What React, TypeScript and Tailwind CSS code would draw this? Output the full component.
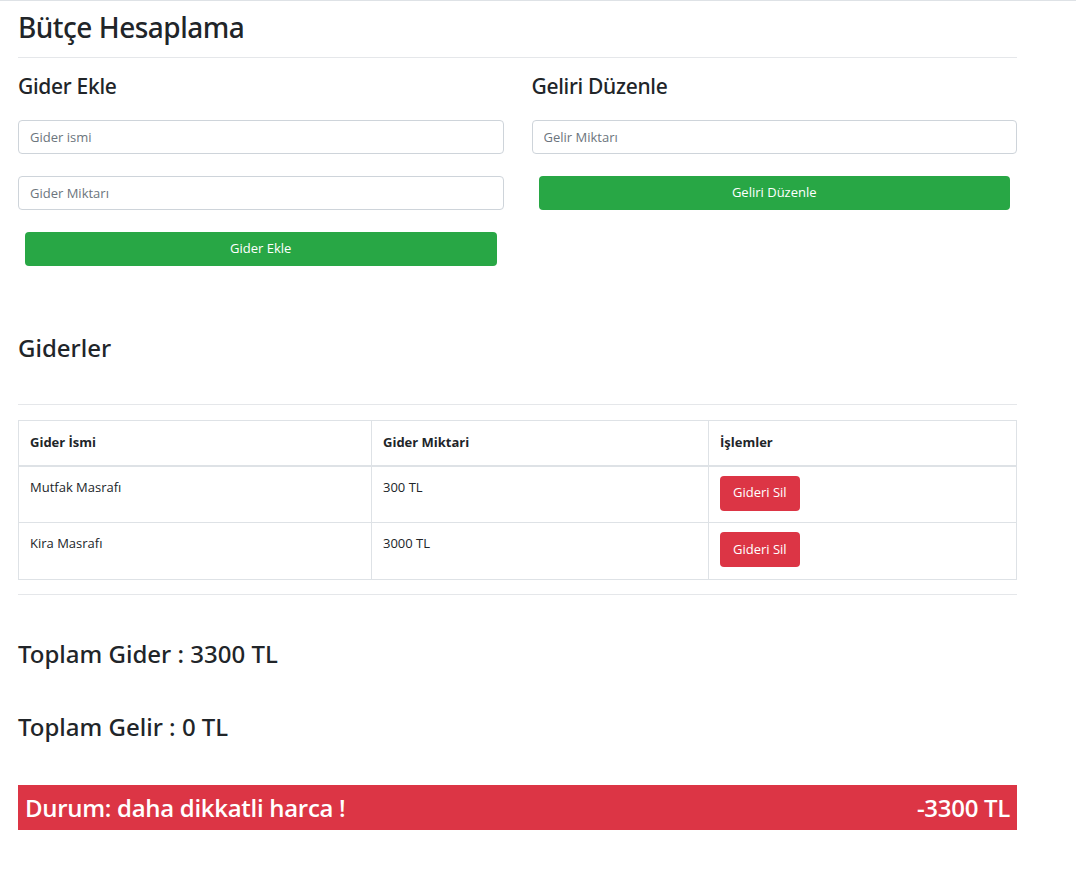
import React from 'react';

const giderler = [
  { id: 1, isim: 'Mutfak Masrafı', miktar: 300 },
  { id: 2, isim: 'Kira Masrafı', miktar: 3000 },
];

const baslik = { fontFamily: '"Noto Sans", "Open Sans", sans-serif' };

export default function App() {
  const toplamGider = giderler.reduce((a, g) => a + g.miktar, 0);
  const toplamGelir = 0;

  return (
    <div
      className="min-h-screen bg-white border-t border-[#dee2e6] text-[#212529]"
      style={{ fontFamily: '"Open Sans", "Noto Sans", sans-serif' }}
    >
      <div className="w-[999px] ml-[18px]">
        {/* başlık */}
        <h1 style={baslik} className="text-[28px] leading-[34px] mt-[9px] mb-[13px] font-medium tracking-[-0.5px]">Bütçe Hesaplama</h1>
        <hr className="border-[#e5e7ea]" />

        {/* formlar */}
        <div className="grid grid-cols-2 gap-[28px] mt-[14px]">
          <div>
            <h4 style={baslik} className="text-[21px] leading-[28px] mb-[20px] font-medium tracking-[-0.3px]">Gider Ekle</h4>
            <input
              placeholder="Gider ismi"
              className="block w-full h-[34px] px-[11px] border border-[#ced4da] rounded text-[13px] placeholder-[#6c757d] outline-none"
            />
            <input
              placeholder="Gider Miktarı"
              className="block w-full h-[34px] px-[11px] mt-[22px] border border-[#ced4da] rounded text-[13px] placeholder-[#6c757d] outline-none"
            />
            <div className="px-[7px] mt-[22px]">
              <button className="w-full h-[34px] bg-[#28a745] text-white text-[13px] rounded">Gider Ekle</button>
            </div>
          </div>
          <div>
            <h4 style={baslik} className="text-[21px] leading-[28px] mb-[20px] font-medium tracking-[-0.3px]">Geliri Düzenle</h4>
            <input
              placeholder="Gelir Miktarı"
              className="block w-full h-[34px] px-[11px] border border-[#ced4da] rounded text-[13px] placeholder-[#6c757d] outline-none"
            />
            <div className="px-[7px] mt-[22px]">
              <button className="w-full h-[34px] bg-[#28a745] text-white text-[13px] rounded">Geliri Düzenle</button>
            </div>
          </div>
        </div>

        {/* giderler tablosu */}
        <h3 style={baslik} className="text-[24px] leading-[30px] mt-[67px] mb-[41px] font-medium">Giderler</h3>
        <hr className="border-[#e5e7ea]" />
        <table className="w-full mt-[15px] border-collapse text-[13px]">
          <thead>
            <tr className="h-[45px]">
              <th className="w-[353px] text-left font-bold px-[11px] border border-[#dee2e6] border-b-2">Gider İsmi</th>
              <th className="w-[337px] text-left font-bold px-[11px] border border-[#dee2e6] border-b-2">Gider Miktari</th>
              <th className="text-left font-bold px-[11px] border border-[#dee2e6] border-b-2">İşlemler</th>
            </tr>
          </thead>
          <tbody>
            {giderler.map((g) => (
              <tr key={g.id} className="h-[57px]">
                <td className="align-top px-[11px] pt-[11px] border border-[#dee2e6]">{g.isim}</td>
                <td className="align-top px-[11px] pt-[11px] border border-[#dee2e6]">{g.miktar} TL</td>
                <td className="align-top px-[11px] pt-[9px] border border-[#dee2e6]">
                  <button className="h-[35px] px-[13px] bg-[#dc3545] text-white text-[13px] rounded">Gideri Sil</button>
                </td>
              </tr>
            ))}
          </tbody>
        </table>
        <hr className="border-[#e5e7ea] mt-[14px]" />

        {/* toplamlar */}
        <h3 style={baslik} className="text-[24px] leading-[30px] mt-[44px] font-medium">Toplam Gider : {toplamGider} TL</h3>
        <h3 style={baslik} className="text-[24px] leading-[30px] mt-[43px] font-medium">Toplam Gelir : {toplamGelir} TL</h3>

        <div className="flex justify-between items-center h-[45px] mt-[43px] px-[7px] bg-[#dc3545] text-white text-[24px] font-semibold tracking-[-0.3px]">
          <span>Durum: daha dikkatli harca !</span>
          <span>{toplamGelir - toplamGider} TL</span>
        </div>
      </div>
    </div>
  );
}
